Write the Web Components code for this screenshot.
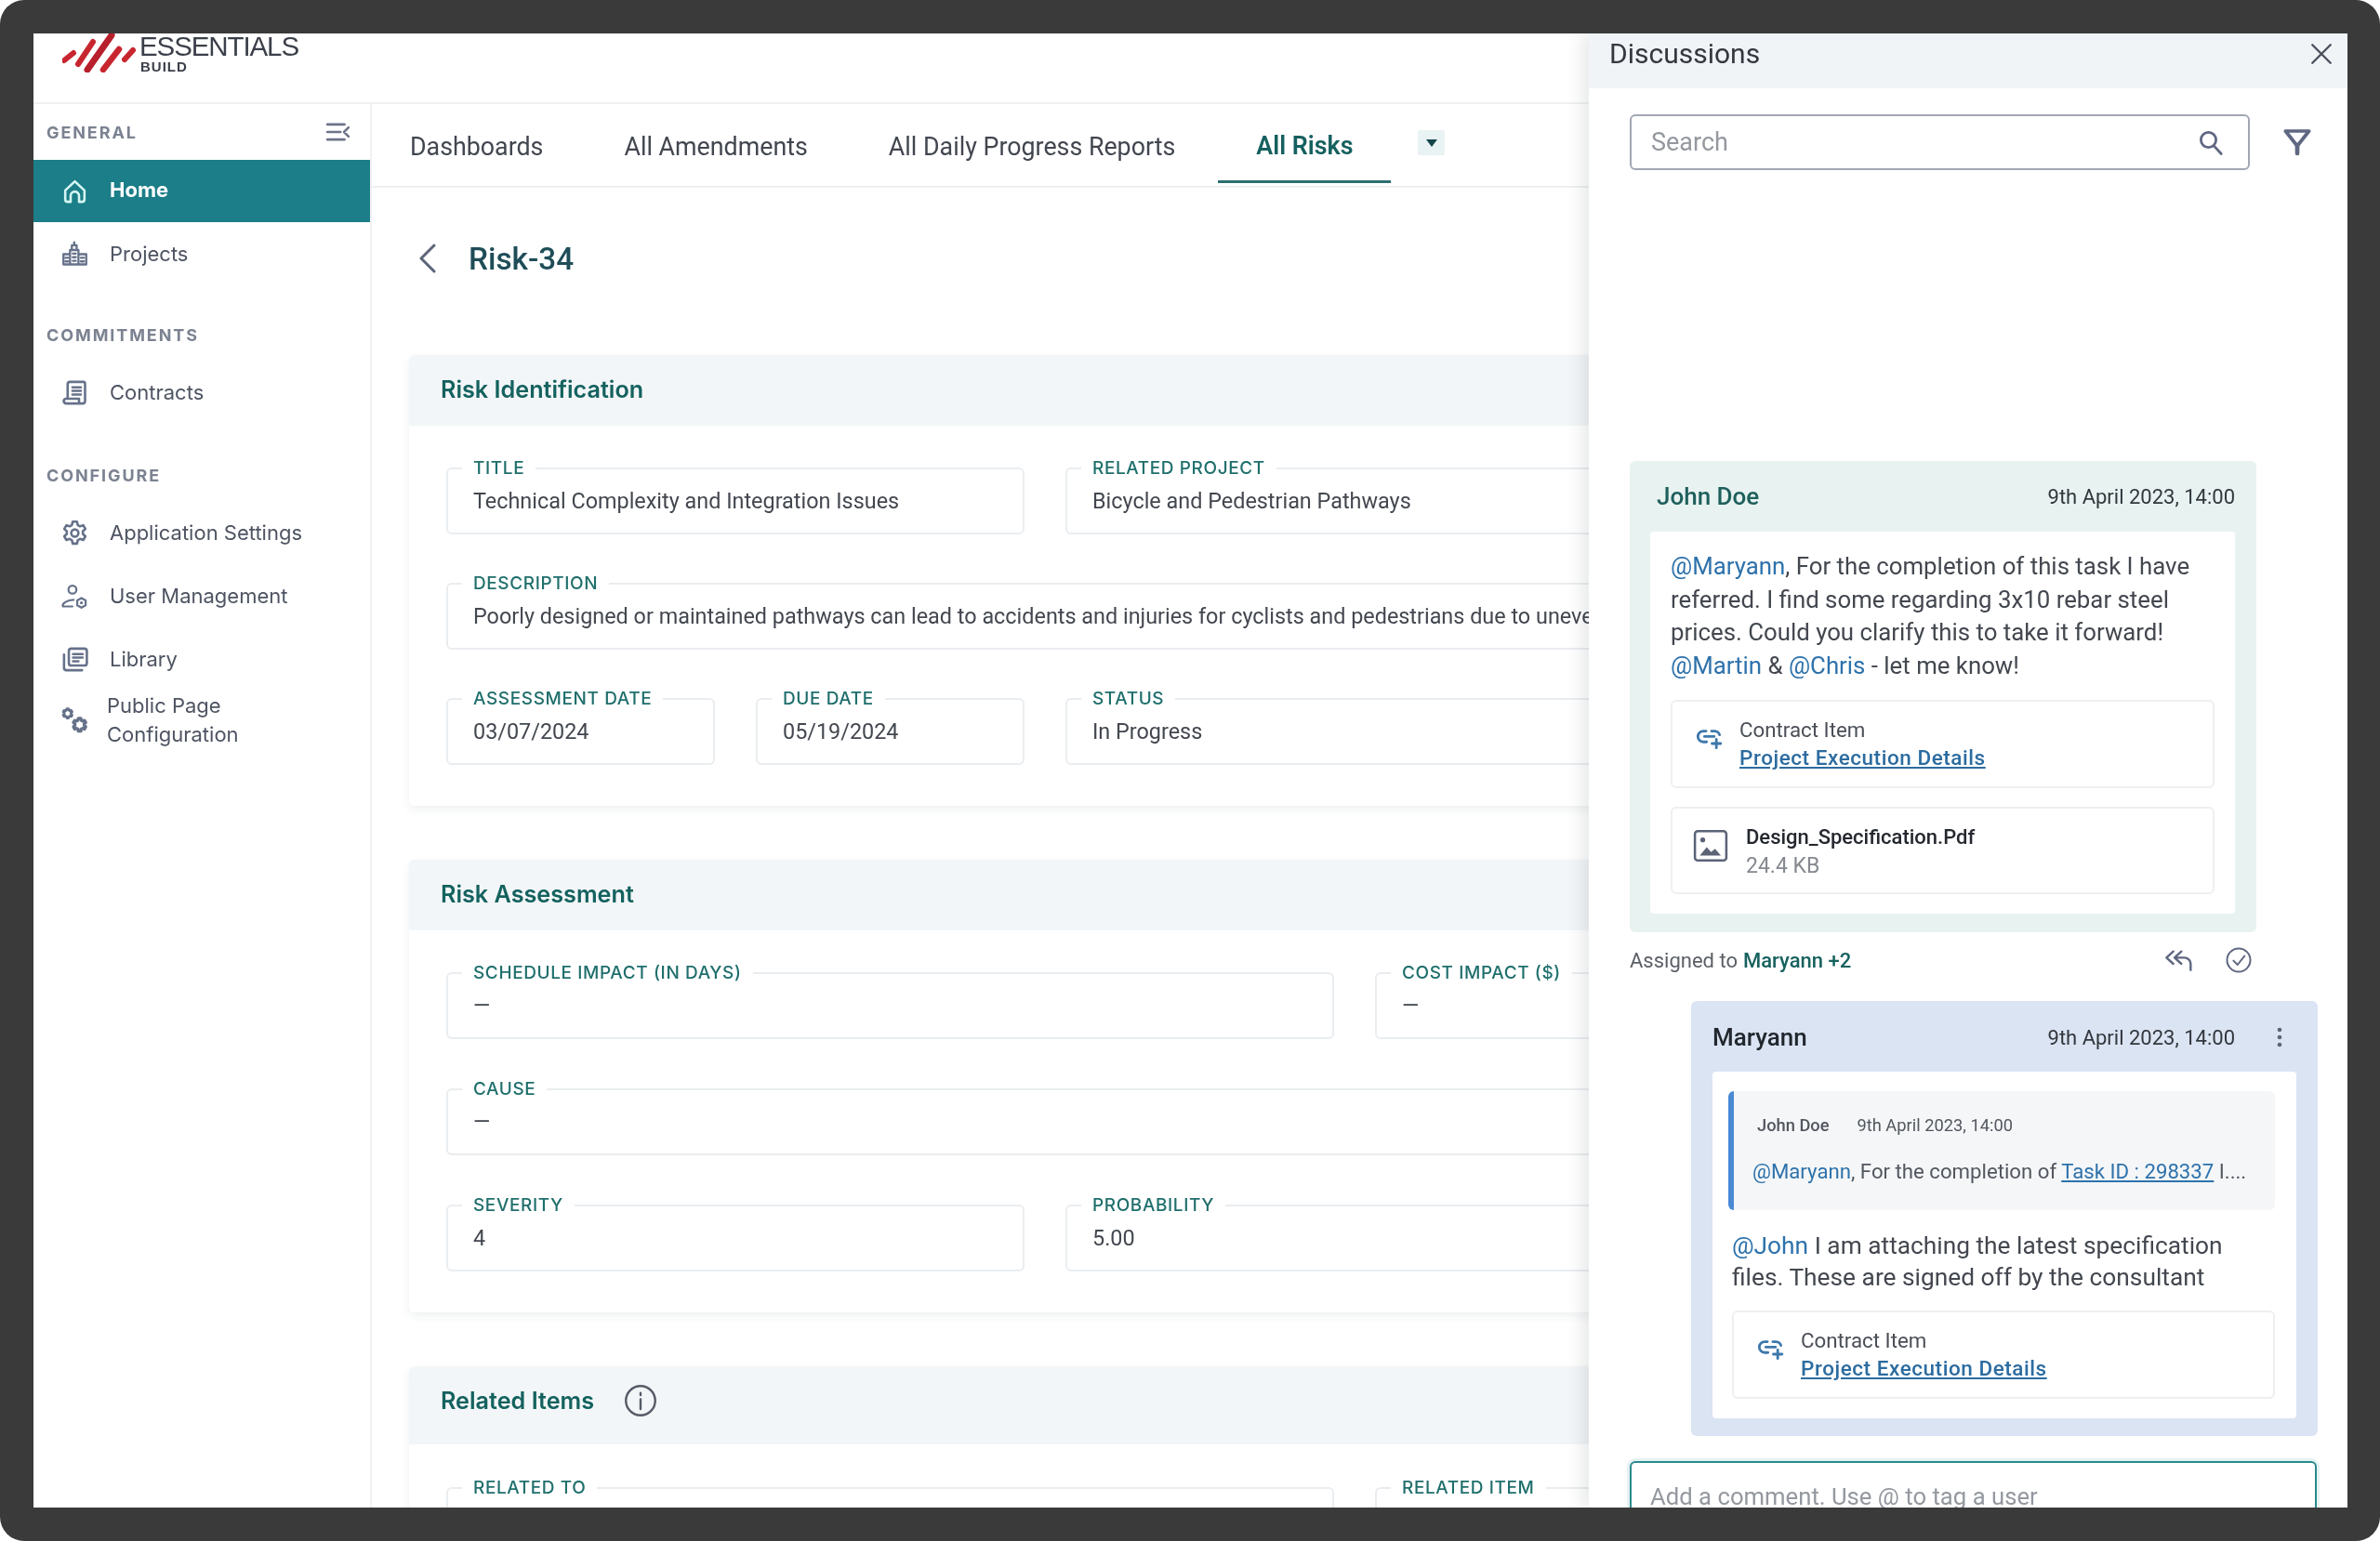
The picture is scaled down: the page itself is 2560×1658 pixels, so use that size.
<!DOCTYPE html>
<html>
<head>
<meta charset="utf-8">
<title>Risk-34</title>
<style>
	html, body { margin: 0; padding: 0; background: #fff; }
</style>
</head>
<body>
<app-frame>
	<top-bar slot="top"></top-bar>
	<side-nav slot="side">
		<nav-label collapse>GENERAL</nav-label>
		<nav-item icon="home" active>Home</nav-item>
		<nav-item icon="projects">Projects</nav-item>
		<nav-label section style="margin-top: 33px">COMMITMENTS</nav-label>
		<nav-item icon="contracts">Contracts</nav-item>
		<nav-label section style="margin-top: 35px">CONFIGURE</nav-label>
		<nav-item icon="gear">Application Settings</nav-item>
		<nav-item icon="usergear">User Management</nav-item>
		<nav-item icon="library">Library</nav-item>
		<nav-item icon="gears" tall>Public Page<br>Configuration</nav-item>
	</side-nav>
	<main-view slot="main">
		<tab-bar>
			<tab-item>Dashboards</tab-item>
			<tab-item>All Amendments</tab-item>
			<tab-item>All Daily Progress Reports</tab-item>
			<tab-item active>All Risks</tab-item>
		</tab-bar>
		<page-title>Risk-34</page-title>
		<form-card heading="Risk Identification">
			<form-field label="TITLE" span="2">Technical Complexity and Integration Issues</form-field>
			<form-field label="RELATED PROJECT" span="2">Bicycle and Pedestrian Pathways</form-field>
			<form-field label="DESCRIPTION" span="6">Poorly designed or maintained pathways can lead to accidents and injuries for cyclists and pedestrians due to uneven surfaces.</form-field>
			<form-field label="ASSESSMENT DATE" span="1">03/07/2024</form-field>
			<form-field label="DUE DATE" span="1">05/19/2024</form-field>
			<form-field label="STATUS" span="2">In Progress</form-field>
		</form-card>
		<form-card heading="Risk Assessment" gap="53">
			<form-field label="SCHEDULE IMPACT (IN DAYS)" span="3">—</form-field>
			<form-field label="COST IMPACT ($)" span="3">—</form-field>
			<form-field label="CAUSE" span="6">—</form-field>
			<form-field label="SEVERITY" span="2">4</form-field>
			<form-field label="PROBABILITY" span="2">5.00</form-field>
		</form-card>
		<form-card heading="Related Items" info>
			<form-field label="RELATED TO" span="3"></form-field>
			<form-field label="RELATED ITEM" span="3"></form-field>
		</form-card>
	</main-view>
	<discussion-panel slot="panel">
		<chat-message name="John Doe" date="9th April 2023, 14:00" tone="teal">
			<chat-text>
				<chat-line><user-tag>@Maryann</user-tag>, For the completion of this task I have</chat-line>
				<chat-line>referred. I find some regarding 3x10 rebar steel</chat-line>
				<chat-line>prices. Could you clarify this to take it forward!</chat-line>
				<chat-line><user-tag>@Martin</user-tag> &amp; <user-tag>@Chris</user-tag> - let me know!</chat-line>
			</chat-text>
			<contract-card></contract-card>
			<file-card name="Design_Specification.Pdf" size="24.4 KB"></file-card>
		</chat-message>
		<assign-row>Maryann +2</assign-row>
		<chat-message name="Maryann" date="9th April 2023, 14:00" tone="blue" menu>
			<quote-box name="John Doe" date="9th April 2023, 14:00"><user-tag>@Maryann</user-tag>, For the completion of <text-link>Task ID : 298337</text-link> I....</quote-box>
			<chat-text style="font-size: 26.3px; line-height: 34px; margin-top: 0; padding-bottom: 19px">
				<chat-line><user-tag>@John</user-tag> I am attaching the latest specification</chat-line>
				<chat-line>files. These are signed off by the consultant</chat-line>
			</chat-text>
			<contract-card></contract-card>
		</chat-message>
		<comment-box slot="compose">Add a comment. Use @ to tag a user</comment-box>
	</discussion-panel>
</app-frame>

<script>
const GEAR_PATH = 'm10.200 2.500h3.600l.6 2.800 1.900 1.100 2.700-.9 1.800 3.100-2.100 1.900v2.300l2.100 1.900-1.800 3.100-2.700-.9-1.900 1.100-.6 2.800h-3.600l-.6-2.800-1.900-1.100-2.700.9-1.800-3.100 2.100-1.900v-2.300l-2.100-1.900 1.800-3.100 2.700.9 1.900-1.100z';
const ICONS = {
	home: '<path d="M4 11.5 12 4l8 7.5V19a2 2 0 0 1-2 2h-2.5v-5a3.5 3.5 0 0 0-7 0v5H6a2 2 0 0 1-2-2z"/>',
	projects: '<path d="M2.5 12h5.500v8.500H2.500zM8 8.500h7v12H8zM9.500 8.500V4.500h4v4M11.500 4.500V2M15 12h6.500v8.500H15zM10.300 11.500h2.500M10.300 14.500h2.500M10.300 17.500h2.500M4.300 15h2M4.300 18h2M17 15h2.500M17 18h2.500" stroke-width="1.800"/>',
	contracts: '<path d="M6 17V5a2 2 0 0 1 2-2h11a1.500 1.500 0 0 1 1.500 1.500V19a2 2 0 0 1-2 2H5a2.300 2.300 0 0 1-2.300-2 2 2 0 0 1 2-2h10.800v2.500M10 7.500h7M10 10.500h7M10 13.500h7"/>',
	gear: `<circle cx="12" cy="12" r="3"/><path d="${GEAR_PATH}"/>`,
	usergear: '<circle cx="10" cy="6.500" r="3.300" stroke-width="1.700"/><path d="M2 20.500c-.5-1.500.5-2.500 2-3.500 2-1.300 4-2 7-2M2 20.500h8" stroke-width="1.700"/><path d="m17.500 13.500 3.500 2v4l-3.500 2-3.500-2v-4z" stroke-width="1.700"/><circle cx="17.500" cy="17.500" r=".7" stroke-width="1.200"/>',
	library: '<rect x="7" y="3" width="15" height="14" rx="2"/><path d="M3 8v11a2 2 0 0 0 2 2h13M10.500 7.500h8M10.500 10.500h8M10.500 13.500h4.500"/>',
	gears: `<g transform="translate(1 1) scale(.42)"><path d="${GEAR_PATH}" stroke-width="5"/></g><g transform="translate(9 8.500) scale(.58)"><path d="${GEAR_PATH}" stroke-width="4.500"/></g>`,
	collapse: '<path d="M2 4.500h17M2 12h13M2 19.500h17M23 7.500 18.500 12l4.500 4.500"/>',
	chevron: '<path d="M17 2 3 16l14 14"/>',
	close: '<path d="M3 3l18 18M21 3 3 21"/>',
	search: '<circle cx="10" cy="10" r="6.500"/><path d="m15 15.500 6 6.500"/>',
	filter: '<path d="M2.500 3h19L12 15z"/><path d="M12 15v6" stroke-width="3.500"/>',
	link: '<path d="M9.500 6.500H7a5 5 0 0 0 0 10h3M14.500 6.500h3a5 5 0 0 1 4.500 3.500M8 11.500h9M19 14v8M15 18h8"/>',
	image: '<rect x="2" y="2" width="32" height="30" rx="3"/><circle cx="10" cy="11" r="2.500" fill="currentColor" stroke="none"/><path d="M7 27 14 18.500l4.500 5 4-3.500 6 7z" fill="currentColor" stroke="none"/>',
	reply: '<path d="M8 5 2.500 10 8 15M14.500 5 9 10l5.500 5M9 10h8a5 5 0 0 1 5 5v5"/>',
	check: '<circle cx="12" cy="12" r="10"/><path d="m7.500 12.500 3.500 3.500 6-7.500"/>',
	info: '<circle cx="12" cy="12" r="10.500"/><path d="M12 11v7M12 6.500v1.500"/>',
	kebab: '<circle cx="12" cy="4" r="2.300" fill="currentColor" stroke="none"/><circle cx="12" cy="12" r="2.300" fill="currentColor" stroke="none"/><circle cx="12" cy="20" r="2.300" fill="currentColor" stroke="none"/>'
};
const VIEWBOX = { chevron: '0 0 20 32', image: '0 0 36 34' };

class BaseElement extends HTMLElement {
	constructor() {
		super();
		this.attachShadow({ mode: 'open' });
	}
	connectedCallback() {
		this.shadowRoot.innerHTML = this.render();
	}
	attr(name, fallback = '') {
		const value = this.getAttribute(name);
		return value === null ? fallback : value;
	}
}

class AppIcon extends BaseElement {
	render() {
		const name = this.attr('name');
		const w = this.attr('w', 28);
		const h = this.attr('h', w);
		return `<style>
			:host { display: inline-flex; flex: none; width: ${w}px; height: ${h}px; }
			svg { width: 100%; height: 100%; fill: none; stroke: currentColor; stroke-width: ${this.attr('sw', 2)}; stroke-linecap: round; stroke-linejoin: round; }
		</style><svg viewBox="${VIEWBOX[name] || '0 0 24 24'}">${ICONS[name]}</svg>`;
	}
}

class AppFrame extends BaseElement {
	render() {
		return `<style>
			:host { display: block; width: 2560px; height: 1658px; background: #3a3a3a; border-radius: 26px; padding: 36px 35px 36px 36px; box-sizing: border-box; overflow: hidden; font-family: Inter, sans-serif; }
			.screen { position: relative; width: 100%; height: 100%; background: #fff; overflow: hidden; display: flex; flex-direction: column; filter: blur(.6px); }
			.body { flex: 1; display: flex; min-height: 0; }
		</style>
		<div class="screen">
			<slot name="top"></slot>
			<div class="body"><slot name="side"></slot><slot name="main"></slot></div>
			<slot name="panel"></slot>
		</div>`;
	}
}

class TopBar extends BaseElement {
	render() {
		return `<style>
			:host { display: flex; flex: none; height: 76px; box-sizing: border-box; border-bottom: 2px solid #f0f1f3; padding: 0 0 0 31px; align-items: flex-start; font-family: "Liberation Sans", sans-serif; color: #3b3f49; }
			svg { width: 80px; height: 42px; flex: none; fill: none; stroke-linecap: round; }
			.name { margin-left: 3px; display: flex; flex-direction: column; }
			.big { font-size: 29.5px; line-height: 28px; letter-spacing: -1.1px; }
			.small { font-size: 15px; line-height: 16px; font-weight: 700; letter-spacing: 1px; margin-top: 0; margin-left: 1px; }
		</style>
		<svg viewBox="0 0 80 42">
			<path d="M2 29 12 21" stroke="#c8262f" stroke-width="6"/>
			<path d="M17 33 33 9" stroke="#c8262f" stroke-width="6"/>
			<path d="M27 39 53 2" stroke="#b81f2c" stroke-width="7"/>
			<path d="M44 39 61 17" stroke="#c8262f" stroke-width="6.500"/>
			<path d="M67 28 76 18" stroke="#c8262f" stroke-width="6"/>
		</svg>
		<div class="name"><span class="big">ESSENTIALS</span><span class="small">BUILD</span></div>`;
	}
}

class SideNav extends BaseElement {
	render() {
		return `<style>
			:host { display: flex; flex-direction: column; flex: none; width: 364px; box-sizing: border-box; border-right: 2px solid #eff1f3; }
		</style><slot></slot>`;
	}
}

class NavLabel extends BaseElement {
	render() {
		const section = this.hasAttribute('section');
		return `<style>
			:host { display: flex; align-items: center; justify-content: space-between; flex: none; height: ${section ? 40 : 60}px; margin-bottom: ${section ? 8 : 0}px; padding: 0 18px 0 14px; font-size: 18px; font-weight: 700; letter-spacing: 1.9px; color: #7b8291; }
			app-icon { color: #6d7588; }
		</style><span><slot></slot></span>${this.hasAttribute('collapse') ? '<app-icon name="collapse" w="34" h="26" sw="2.4"></app-icon>' : ''}`;
	}
}

class NavItem extends BaseElement {
	render() {
		const active = this.hasAttribute('active');
		const tall = this.hasAttribute('tall');
		return `<style>
			:host { display: flex; align-items: center; flex: none; gap: ${tall ? 19 : 22}px; height: ${active ? 67 : (tall ? 62 : 68)}px; margin-top: ${tall ? 1 : 0}px; padding-left: 29px; font-size: 22px; line-height: 31px; font-weight: ${active ? 700 : 400}; color: ${active ? '#fff' : '#4e5462'}; background: ${active ? '#1b7e88' : 'transparent'}; }
			span { ${active ? 'margin-bottom: 3px;' : ''} }
			app-icon { color: ${active ? '#d6f6f3' : '#66718a'}; }
		</style><app-icon name="${this.attr('icon')}" w="31"></app-icon><span><slot></slot></span>`;
	}
}

class MainView extends BaseElement {
	render() {
		return `<style>
			:host { display: block; flex: none; width: 1309px; overflow: hidden; font-family: Roboto, sans-serif; }
		</style><slot></slot>`;
	}
}

class TabBar extends BaseElement {
	render() {
		return `<style>
			:host { display: flex; height: 90px; box-sizing: border-box; border-bottom: 2px solid #eef0f2; }
			.more { width: 29px; height: 27px; margin: 28px 0 0 24px; background: #eaf3f3; display: flex; align-items: center; justify-content: center; border-radius: 2px; }
			.more i { border: 6px solid transparent; border-top: 8px solid #14464c; border-bottom: 0; }
		</style><slot></slot><div class="more"><i></i></div>`;
	}
}

class TabItem extends BaseElement {
	render() {
		const active = this.hasAttribute('active');
		return `<style>
			:host { display: flex; align-items: center; height: 85px; box-sizing: border-box; padding: ${active ? 8 : 10}px 41px 0; margin-right: 5px; font-size: 26.8px; font-weight: ${active ? 600 : 400}; color: ${active ? '#15615f' : '#42464f'}; border-bottom: 3px solid ${active ? '#2c6f70' : 'transparent'}; }
		</style><slot></slot>`;
	}
}

class PageTitle extends BaseElement {
	render() {
		return `<style>
			:host { display: flex; align-items: center; height: 50px; margin: 51px 0 79px 50px; gap: 34px; font-size: 33.3px; font-weight: 500; color: #1f4d58; }
			app-icon { color: #5c6478; }
		</style><app-icon name="chevron" w="20" h="32" sw="3"></app-icon><slot></slot>`;
	}
}

class FormCard extends BaseElement {
	render() {
		const info = this.hasAttribute('info');
		return `<style>
			:host { display: block; width: 2036px; margin: 0 0 58px 40px; box-shadow: 0 4px 10px rgba(30,50,70,.07); border-radius: 6px; background: #fff; }
			header { display: flex; align-items: center; gap: 32px; height: ${info ? 84 : 76}px; box-sizing: border-box; padding: 0 34px ${info ? 10 : 2}px; background: #f3f6f8; font-family: Inter, sans-serif; font-size: 25.2px; font-weight: 600; color: #14625f; border-radius: 6px 6px 0 0; }
			header app-icon { color: #555b67; }
			.grid { display: grid; grid-template-columns: repeat(6, 289px); column-gap: 44px; row-gap: ${this.attr('gap', 52)}px; padding: ${info ? 46 : 45}px 41px 44px 40px; }
		</style>
		<header><span>${this.attr('heading')}</span>${info ? '<app-icon name="info" w="36" sw="1.6"></app-icon>' : ''}</header>
		<div class="grid"><slot></slot></div>`;
	}
}

class FormField extends BaseElement {
	render() {
		return `<style>
			:host { position: relative; display: flex; align-items: center; grid-column: span ${this.attr('span', 2)}; height: 72px; box-sizing: border-box; border: 2px solid #eaedf0; border-radius: 6px; padding: 0 0 1px 27px; font-size: 23.4px; color: #43474f; white-space: nowrap; min-width: 0; }
			label { position: absolute; left: 15px; top: -12px; padding: 0 12px; background: #fff; font-size: 19px; line-height: 22px; font-weight: 500; letter-spacing: .6px; color: #1f6f6c; font-family: Inter, sans-serif; }
			.value { overflow: hidden; }
		</style><label>${this.attr('label')}</label><span class="value"><slot></slot></span>`;
	}
}

class DiscussionPanel extends BaseElement {
	render() {
		return `<style>
			:host { position: absolute; top: 0; right: 0; bottom: 0; width: 816px; background: #fff; box-shadow: -8px 0 16px rgba(40,50,60,.1); font-family: Roboto, sans-serif; overflow: hidden; }
			header { display: flex; align-items: center; justify-content: space-between; height: 59px; padding: 0 15px 16px 22px; box-sizing: border-box; background: #f0f4f7; font-size: 30px; color: #34383f; }
			header app-icon { color: #4b505c; }
			.search-row { display: flex; align-items: center; margin: 28px 0 0 44px; }
			.search { display: flex; align-items: center; justify-content: space-between; width: 667px; height: 60px; box-sizing: border-box; border: 2px solid #a2a6b4; border-radius: 6px; padding: 0 25px 0 21px; font-size: 27px; color: #94989f; }
			.search app-icon, .filter { color: #5f6781; }
			.filter { margin-left: 35px; }
			.thread { display: flex; flex-direction: column; margin: 313px 0 0 44px; width: 740px; }
			.compose { margin: 27px 0 0 44px; }
		</style>
		<header><span>Discussions</span><app-icon name="close" w="26" sw="2.2"></app-icon></header>
		<div class="search-row">
			<div class="search"><span>Search</span><app-icon name="search" w="30" sw="2.2"></app-icon></div>
			<app-icon class="filter" name="filter" w="32" sw="2.8"></app-icon>
		</div>
		<div class="thread"><slot></slot></div>
		<div class="compose"><slot name="compose"></slot></div>`;
	}
}

class ChatMessage extends BaseElement {
	render() {
		const blue = this.attr('tone') === 'blue';
		return `<style>
			:host { display: block; flex: none; width: 674px; box-sizing: border-box; align-self: ${blue ? 'flex-end' : 'flex-start'}; background: ${blue ? '#dbe4f3' : '#e8f3f1'}; border-radius: 6px; padding: 0 23px ${blue ? 19 : 20}px ${blue ? 23 : 22}px; }
			header { position: relative; display: flex; align-items: center; height: 76px; padding: ${blue ? 2 : 0}px ${blue ? 66 : 0}px 0 ${blue ? 0 : 7}px; box-sizing: border-box; color: #31363c; }
			.name { font-size: 26px; font-weight: 500; color: ${blue ? '#22272e' : '#1f5f5c'}; }
			.date { margin-left: auto; font-size: 22px; color: #33373d; }
			app-icon { position: absolute; right: 6px; color: #5c6478; }
			.inner { background: #fff; border-radius: 4px; padding: 21px ${blue ? 23 : 22}px 21px ${blue ? 21 : 22}px; display: flex; flex-direction: column; }
		</style>
		<header><span class="name">${this.attr('name')}</span><span class="date">${this.attr('date')}</span>${this.hasAttribute('menu') ? '<app-icon name="kebab" w="24" sw="1"></app-icon>' : ''}</header>
		<div class="inner"><slot></slot></div>`;
	}
}

class ChatText extends BaseElement {
	render() {
		return `<style>
			:host { display: block; font-size: 25.8px; line-height: 35.500px; color: #43474f; margin-top: -1px; padding-bottom: 19px; }
		</style><slot></slot>`;
	}
}

class ChatLine extends BaseElement {
	render() {
		return `<style>:host { display: block; white-space: nowrap; }</style><slot></slot>`;
	}
}

class QuoteBox extends BaseElement {
	render() {
		return `<style>
			:host { display: block; height: 128px; box-sizing: border-box; background: #f4f6f8; border-left: 6px solid #4a8ad4; border-radius: 6px; margin: 0 0 21px -4px; padding: 26px 0 0 20px; font-size: 22.2px; color: #53575f; white-space: nowrap; }
			.meta { display: flex; gap: 30px; font-size: 18.3px; line-height: 22px; margin: 0 0 25px 5px; color: #52565e; }
			b { font-weight: 500; }
		</style><div class="meta"><b>${this.attr('name')}</b><span>${this.attr('date')}</span></div><slot></slot>`;
	}
}

class ContractCard extends BaseElement {
	render() {
		return `<style>
			:host { display: flex; align-items: flex-start; gap: 15px; height: 95px; box-sizing: border-box; border: 2px solid #edeff1; border-radius: 6px; padding: 15px 0 0 21px; margin-bottom: 20px; }
			:host(:last-child) { margin-bottom: 0; }
			app-icon { color: #3d78ab; margin-top: 9px; }
			.kind { font-size: 22.3px; line-height: 30px; color: #4a4e56; }
			a { font-size: 22.5px; line-height: 31px; font-weight: 500; letter-spacing: .55px; color: #2c6ca0; text-decoration: underline; }
		</style><app-icon name="link" w="36" h="28" sw="2.4"></app-icon><div><div class="kind">Contract Item</div><a>Project Execution Details</a></div>`;
	}
}

class FileCard extends BaseElement {
	render() {
		return `<style>
			:host { display: flex; align-items: flex-start; gap: 19px; height: 94px; box-sizing: border-box; border: 2px solid #edeff1; border-radius: 6px; padding: 16px 0 0 22px; }
			app-icon { color: #5b6377; margin-top: 6px; }
			.name { font-size: 22px; line-height: 30px; font-weight: 500; color: #24282e; }
			.size { font-size: 23px; line-height: 31px; color: #85898f; }
		</style><app-icon name="image" w="38" h="36" sw="2.4"></app-icon><div><div class="name">${this.attr('name')}</div><div class="size">${this.attr('size')}</div></div>`;
	}
}

class AssignRow extends BaseElement {
	render() {
		return `<style>
			:host { display: flex; flex: none; align-items: center; width: 670px; height: 60px; margin-bottom: 14px; font-size: 22px; color: #5b5f66; }
			b { font-weight: 500; color: #17625f; margin-left: 6px; }
			app-icon { color: #5f6781; }
			.reply { margin-left: auto; margin-right: 34px; }
		</style><span>Assigned to</span><b><slot></slot></b><app-icon class="reply" name="reply" w="32" sw="1.8"></app-icon><app-icon name="check" w="30" sw="1.6"></app-icon>`;
	}
}

class CommentBox extends BaseElement {
	render() {
		return `<style>
			:host { display: block; width: 739px; height: 90px; box-sizing: border-box; border: 2px solid #2a8a8c; border-radius: 6px; padding: 21px 0 0 20px; font-size: 25.7px; line-height: 30px; color: #94989f; box-shadow: 0 0 0 3px #e6f2f2; }
		</style><slot></slot>`;
	}
}

class UserTag extends BaseElement {
	render() {
		return `<style>:host { color: #2e72ab; }</style><slot></slot>`;
	}
}

class TextLink extends BaseElement {
	render() {
		return `<style>:host { color: #2e72ab; text-decoration: underline; }</style><slot></slot>`;
	}
}

const ELEMENTS = {
	'app-icon': AppIcon, 'app-frame': AppFrame, 'top-bar': TopBar, 'side-nav': SideNav,
	'nav-label': NavLabel, 'nav-item': NavItem, 'main-view': MainView, 'tab-bar': TabBar,
	'tab-item': TabItem, 'page-title': PageTitle, 'form-card': FormCard, 'form-field': FormField,
	'discussion-panel': DiscussionPanel, 'chat-message': ChatMessage, 'chat-text': ChatText,
	'chat-line': ChatLine, 'quote-box': QuoteBox, 'contract-card': ContractCard, 'file-card': FileCard,
	'assign-row': AssignRow, 'comment-box': CommentBox, 'user-tag': UserTag, 'text-link': TextLink
};
Object.entries(ELEMENTS).forEach(([name, cls]) => customElements.define(name, cls));
</script>
</body>
</html>
